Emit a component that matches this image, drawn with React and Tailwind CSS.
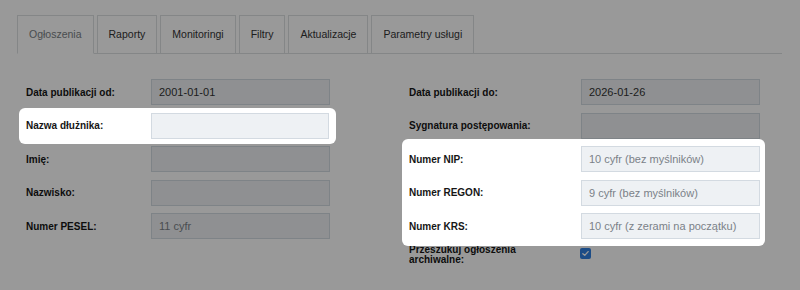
import React, { useState } from 'react';

const tabs = ['Ogłoszenia', 'Raporty', 'Monitoringi', 'Filtry', 'Aktualizacje', 'Parametry usługi'];

const Field = ({ label, value, placeholder, labelWidth }) => (
  <div className="flex items-center h-[26px]">
    <label className={`${labelWidth} shrink-0 text-[10px] font-bold text-[#161616]`}>{label}</label>
    <input
      type="text"
      defaultValue={value}
      placeholder={placeholder}
      className="w-[179px] h-[26px] px-[7px] bg-[#eef1f4] border border-[#d3dae1] text-[11px] text-[#333] placeholder:text-[#7b8188] outline-none"
    />
  </div>
);

const App = () => {
  const [active] = useState(0);

  return (
    <div className="relative w-[800px] h-[290px] bg-white overflow-hidden font-['Liberation_Sans',Arial,sans-serif]">
      <div className="px-[17px] pt-[15px] pr-[18px]">
        <ul className="flex gap-[3px] border-b border-[#dcdfe2]">
          {tabs.map((t, i) => (
            <li
              key={t}
              className={`-mb-px h-[39px] px-[11px] flex items-center border border-[#dcdfe2] text-[10.5px] ${
                i === active ? 'border-b-white bg-white text-[#7a7f85]' : 'text-[#333]'
              }`}
            >
              {t}
            </li>
          ))}
        </ul>

        <div className="flex pt-[25px]">
          <div className="w-[383px] pl-[9px] flex flex-col gap-[7.5px]">
            <Field label="Data publikacji od:" value="2001-01-01" labelWidth="w-[125px]" />
            <div className="relative z-20 -mx-[7px] px-[7px] -my-[5px] py-[5px] bg-white rounded-[6px] w-[317px]">
              <Field label="Nazwa dłużnika:" labelWidth="w-[125px]" />
            </div>
            <Field label="Imię:" labelWidth="w-[125px]" />
            <Field label="Nazwisko:" labelWidth="w-[125px]" />
            <Field label="Numer PESEL:" placeholder="11 cyfr" labelWidth="w-[125px]" />
          </div>

          <div className="pl-[9px] flex flex-col gap-[7.5px]">
            <Field label="Data publikacji do:" value="2026-01-26" labelWidth="w-[172px]" />
            <Field label="Sygnatura postępowania:" labelWidth="w-[172px]" />
            <div className="relative z-20 -ml-[7px] -mr-[5px] pl-[7px] pr-[5px] -my-[7px] py-[7px] bg-white rounded-[6px] flex flex-col gap-[7.5px]">
              <Field label="Numer NIP:" placeholder="10 cyfr (bez myślników)" labelWidth="w-[172px]" />
              <Field label="Numer REGON:" placeholder="9 cyfr (bez myślników)" labelWidth="w-[172px]" />
              <Field label="Numer KRS:" placeholder="10 cyfr (z zerami na początku)" labelWidth="w-[172px]" />
            </div>
            <div className="flex items-start mt-[-2px]">
              <label className="w-[172px] shrink-0 pr-[50px] text-[10px] leading-[10.5px] font-bold text-[#161616]">
                Przeszukuj ogłoszenia archiwalne:
              </label>
              <span className="mt-[3px] -ml-px w-[11px] h-[11px] rounded-[2px] bg-[#2f7fe0] flex items-center justify-center">
                <svg viewBox="0 0 12 12" className="w-[9px] h-[9px]">
                  <path d="M2.5 6.2 L5 8.5 L9.5 3.5" fill="none" stroke="white" strokeWidth="1.8" strokeLinecap="round" strokeLinejoin="round" />
                </svg>
              </span>
            </div>
          </div>
        </div>
      </div>

      <div className="absolute inset-0 z-10 bg-black/40" />
    </div>
  );
};

export default App;
